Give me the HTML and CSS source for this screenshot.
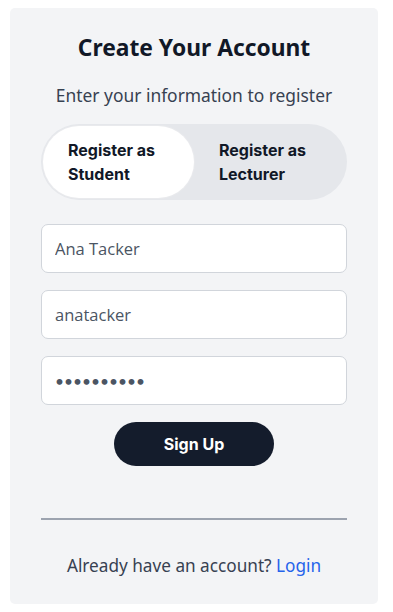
FILE: index.html
```html
<!DOCTYPE html>
<html lang="en">
<head>
<meta charset="utf-8">
<title>Create Your Account</title>
<link rel="stylesheet" href="styles.css">
</head>
<body>
<div class="card">
  <h1 class="title">Create Your Account</h1>
  <p class="subtitle">Enter your information to register</p>
  <div class="toggle">
    <button class="tab active">Register as Student</button>
    <button class="tab">Register as Lecturer</button>
  </div>
  <form class="form">
    <input class="field" type="text" value="Ana Tacker">
    <input class="field" type="text" value="anatacker">
    <input class="field pw" type="password" value="anatacker1">
    <button class="submit" type="button">Sign Up</button>
  </form>
  <hr class="divider">
  <p class="footer">Already have an account? <a class="link" href="#">Login</a></p>
</div>
</body>
</html>
```
FILE: styles.css
```css
html, body { background: #ffffff; }
body {
  margin: 8px 15px 8px 10px;
  font-family: "Noto Sans", "DejaVu Sans", sans-serif;
}
.card {
  background: #f3f4f6;
  border-radius: 5px;
  padding: 26px 31px 26px 31px;
  display: flex;
  flex-direction: column;
}
.title {
  margin: 0;
  text-align: center;
  font-size: 22.8px;
  line-height: 28px;
  font-weight: 700;
  color: #111827;
}
.subtitle {
  margin: 21px 0 0;
  text-align: center;
  font-size: 17.4px;
  line-height: 24px;
  color: #374151;
}
.toggle {
  margin-top: 17px;
  background: #e5e7eb;
  border-radius: 40px;
  padding: 2px;
  display: grid;
  grid-template-columns: 1fr 1fr;
  height: 76px;
  box-sizing: border-box;
}
.tab {
  border: 0;
  background: transparent;
  border-radius: 40px;
  text-align: left;
  padding: 0 20px 0 25px;
  font-family: Inter, "Liberation Sans", sans-serif;
  font-weight: 700;
  font-size: 16px;
  line-height: 24px;
  color: #111827;
}
.tab.active {
  background: #ffffff;
  box-shadow: 0 0 0 1px #e9eaed;
}
.form {
  margin-top: 24px;
  display: flex;
  flex-direction: column;
  gap: 17px;
}
.field {
  height: 49px;
  box-sizing: border-box;
  border: 1px solid #d1d5db;
  border-radius: 7px;
  background: #ffffff;
  padding: 0 13px;
  font-family: "Open Sans", "Noto Sans", sans-serif;
  font-size: 16.5px;
  color: #4b5563;
  outline: none;
}
.field.pw {
  font-family: Lato, sans-serif;
  font-size: 15.5px;
  letter-spacing: 0;
}
.submit {
  align-self: center;
  width: 160px;
  height: 44px;
  border: 0;
  border-radius: 22px;
  background: #141c2c;
  color: #ffffff;
  font-family: Inter, "Liberation Sans", sans-serif;
  font-weight: 700;
  font-size: 16px;
}
.divider {
  margin: 52px 0 0;
  border: 0;
  height: 2px;
  background: #9ca3af;
}
.footer {
  margin: 34px 0 0;
  text-align: center;
  font-size: 17.2px;
  line-height: 24px;
  color: #374151;
}
.link {
  color: #2563eb;
  text-decoration: none;
}
```
